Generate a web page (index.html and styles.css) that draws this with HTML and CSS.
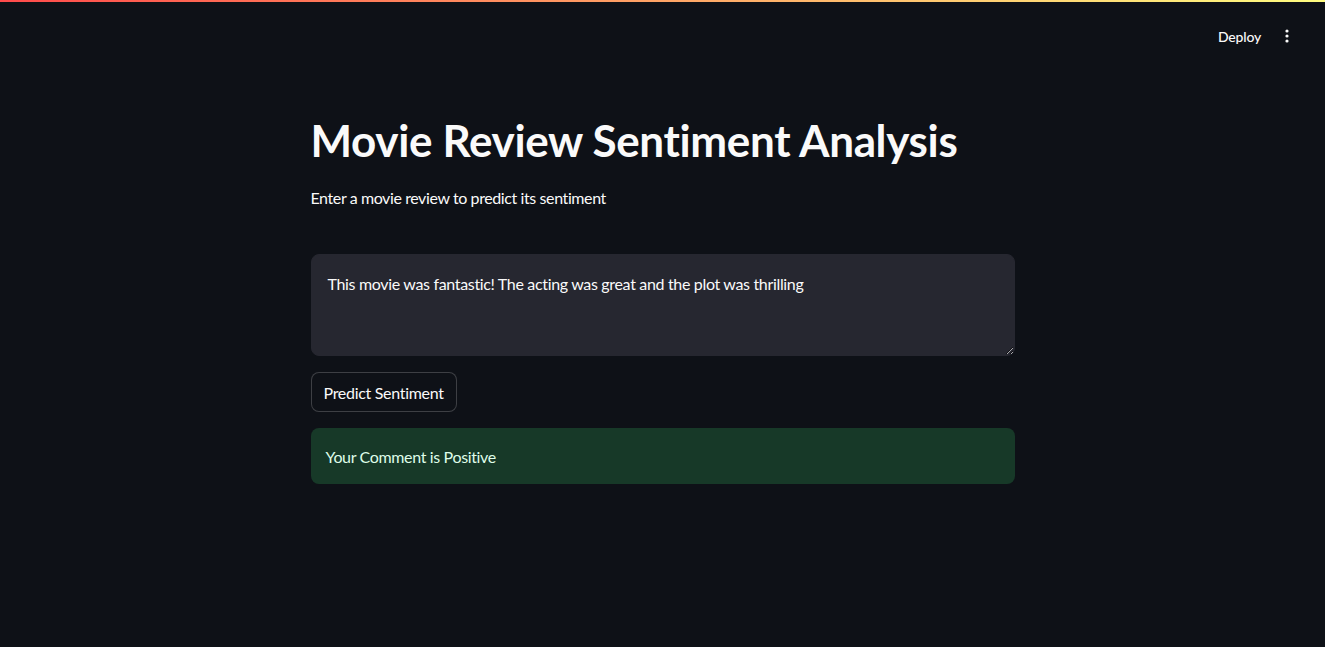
FILE: index.html
```html
<!DOCTYPE html>
<html>
<head>
<meta charset="utf-8">
<link rel="stylesheet" href="styles.css">
</head>
<body>
<div class="decoration"></div>
<header class="toolbar">
  <span class="deploy">Deploy</span>
  <span class="menu">
    <svg width="16" height="16" viewBox="0 0 16 16"><circle cx="8" cy="3" r="1.6" fill="#fafafa"/><circle cx="8" cy="8" r="1.6" fill="#fafafa"/><circle cx="8" cy="13" r="1.6" fill="#fafafa"/></svg>
  </span>
</header>
<main class="main">
  <h1 class="title">Movie Review Sentiment Analysis</h1>
  <p class="subtitle">Enter a movie review to predict its sentiment</p>
  <div class="textarea-wrap">
    <textarea class="review">This movie was fantastic! The acting was great and the plot was thrilling</textarea>
  </div>
  <button class="btn">Predict Sentiment</button>
  <div class="alert">Your Comment is Positive</div>
</main>
</body>
</html>
```
FILE: styles.css
```css
* { box-sizing: border-box; }
html, body { margin: 0; padding: 0; }
body {
  background: #0e1117;
  color: #fafafa;
  font-family: Lato, "Noto Sans", sans-serif;
  height: 647px;
  overflow: hidden;
}
.decoration {
  height: 2px;
  background: linear-gradient(90deg, #ff4b4b, #fffd80);
}
.toolbar {
  display: flex;
  justify-content: flex-end;
  align-items: center;
  height: 72px;
  padding: 0 30px 0 0;
  margin-top: -2px;
  gap: 18px;
}
.deploy {
  font-size: 14px;
  font-weight: 500;
  color: #fafafa;
  letter-spacing: -0.2px;
}
.menu { display: flex; width: 16px; height: 16px; }
.main {
  width: 704px;
  margin: 0 auto;
  padding-top: 42px;
  display: flex;
  flex-direction: column;
}
.title {
  font-size: 44px;
  font-weight: 700;
  line-height: 1.2;
  margin: 0;
  letter-spacing: -0.35px;
}
.subtitle {
  font-size: 16px;
  margin: 18px 0 0;
  line-height: 1.6;
  letter-spacing: -0.4px;
}
.textarea-wrap { margin-top: 44px; }
.review {
  display: block;
  width: 100%;
  height: 102px;
  background: #262730;
  color: #fafafa;
  border: 1px solid #262730;
  border-radius: 8px;
  padding: 16px;
  font-family: inherit;
  font-size: 16px;
  line-height: 1.6;
  letter-spacing: -0.33px;
  resize: vertical;
  outline: none;
}
.btn {
  align-self: flex-start;
  margin-top: 16px;
  height: 40px;
  padding: 0 12px;
  background: #0e1117;
  color: #fafafa;
  border: 1px solid rgba(250,250,250,0.2);
  border-radius: 8px;
  font-family: inherit;
  font-size: 16px;
  letter-spacing: -0.3px;
}
.alert {
  margin-top: 16px;
  height: 56px;
  display: flex;
  align-items: center;
  padding: 0 15px;
  background: #173928;
  color: #dffde9;
  border-radius: 8px;
  font-size: 16px;
  letter-spacing: -0.35px;
}
```
